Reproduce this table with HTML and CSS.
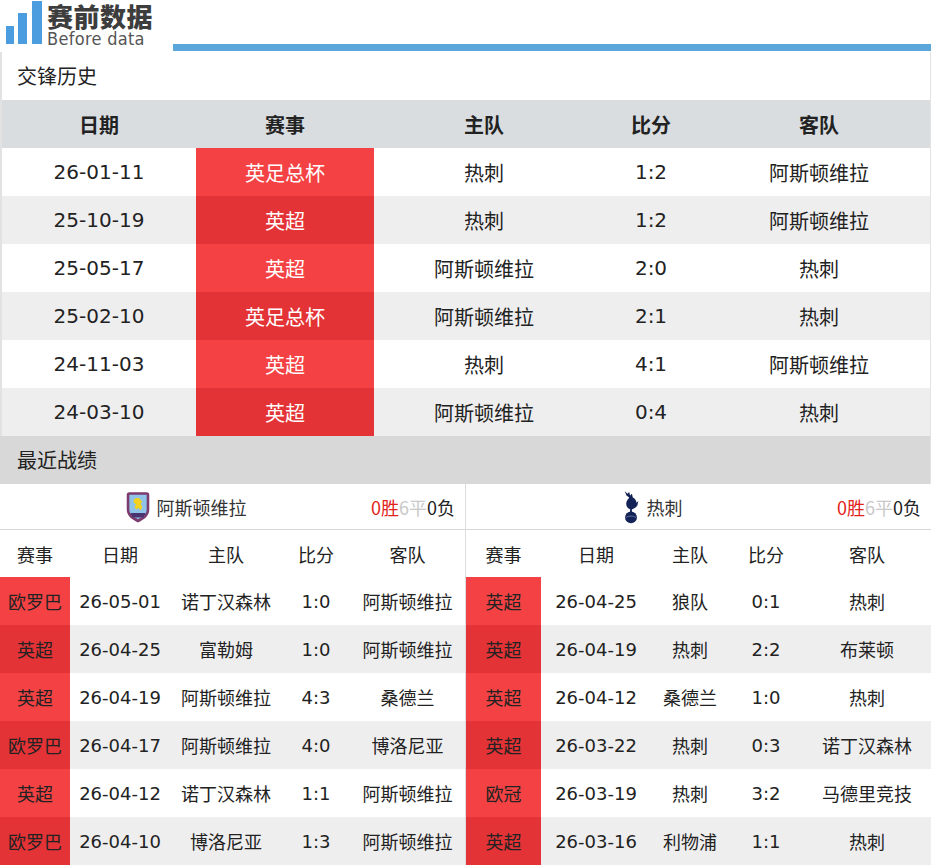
FILE: index.html
```html
<!DOCTYPE html>
<html lang="zh-CN">
<head>
<meta charset="utf-8">
<title>赛前数据</title>
<link rel="stylesheet" href="styles.css">
</head>
<body>
<div class="page">
  <header class="top">
    <div class="logo">
      <svg class="bars" width="44" height="46" viewBox="0 0 44 46">
        <rect x="6" y="26" width="8" height="18" fill="#4b9de0"/>
        <rect x="18" y="13" width="9" height="31" fill="#4b9de0"/>
        <rect x="32" y="1" width="10" height="43" fill="#4b9de0"/>
      </svg>
      <div class="logo-text">
        <div class="logo-cn">赛前数据</div>
        <div class="logo-en">Before data</div>
      </div>
    </div>
    <div class="topline"></div>
  </header>

  <div class="section-title white">交锋历史</div>
  <table class="h2h">
    <colgroup><col style="width:195px"><col style="width:178px"><col style="width:220px"><col style="width:114px"><col></colgroup>
    <thead><tr><th>日期</th><th>赛事</th><th>主队</th><th>比分</th><th>客队</th></tr></thead>
    <tbody>
      <tr><td class="num">26-01-11</td><td class="comp">英足总杯</td><td>热刺</td><td class="num">1:2</td><td>阿斯顿维拉</td></tr>
      <tr><td class="num">25-10-19</td><td class="comp">英超</td><td>热刺</td><td class="num">1:2</td><td>阿斯顿维拉</td></tr>
      <tr><td class="num">25-05-17</td><td class="comp">英超</td><td>阿斯顿维拉</td><td class="num">2:0</td><td>热刺</td></tr>
      <tr><td class="num">25-02-10</td><td class="comp">英足总杯</td><td>阿斯顿维拉</td><td class="num">2:1</td><td>热刺</td></tr>
      <tr><td class="num">24-11-03</td><td class="comp">英超</td><td>热刺</td><td class="num">4:1</td><td>阿斯顿维拉</td></tr>
      <tr><td class="num">24-03-10</td><td class="comp">英超</td><td>阿斯顿维拉</td><td class="num">0:4</td><td>热刺</td></tr>
    </tbody>
  </table>

  <div class="section-title grey">最近战绩</div>
  <div class="recent">
    <div class="half left">
      <div class="team-row">
        <div class="team">
          <svg class="crest" width="26" height="34" viewBox="0 0 30 38">
            <path d="M2 5 Q2 2 5 2 L25 2 Q28 2 28 5 L28 22 C28 30 21 34 15 37 C9 34 2 30 2 22 Z" fill="#7b3b6e"/>
            <path d="M5 5 L25 5 L25 22 C25 28 20 31 15 33 C10 31 5 28 5 22 Z" fill="#8fc4e8"/>
            <path d="M10 11 C12 8 17 8 18 11 L20 13 L18 15 L20 19 L18 23 L16 20 L13 22 L11 19 L13 16 L10 14 Z" fill="#f3d220"/>
            <path d="M6 26 L24 26 L21 31 L9 31 Z" fill="#4a3470"/>
          </svg>
          <span class="team-name">阿斯顿维拉</span>
        </div>
        <div class="record"><span class="w">0胜</span><span class="d">6平</span><span class="l">0负</span></div>
      </div>
      <table class="recent-table">
        <colgroup><col style="width:70px"><col style="width:100px"><col style="width:112px"><col style="width:68px"><col></colgroup>
        <thead><tr><th>赛事</th><th>日期</th><th>主队</th><th>比分</th><th>客队</th></tr></thead>
        <tbody>
          <tr><td class="comp">欧罗巴</td><td class="num">26-05-01</td><td>诺丁汉森林</td><td class="num">1:0</td><td>阿斯顿维拉</td></tr>
          <tr><td class="comp">英超</td><td class="num">26-04-25</td><td>富勒姆</td><td class="num">1:0</td><td>阿斯顿维拉</td></tr>
          <tr><td class="comp">英超</td><td class="num">26-04-19</td><td>阿斯顿维拉</td><td class="num">4:3</td><td>桑德兰</td></tr>
          <tr><td class="comp">欧罗巴</td><td class="num">26-04-17</td><td>阿斯顿维拉</td><td class="num">4:0</td><td>博洛尼亚</td></tr>
          <tr><td class="comp">英超</td><td class="num">26-04-12</td><td>诺丁汉森林</td><td class="num">1:1</td><td>阿斯顿维拉</td></tr>
          <tr><td class="comp">欧罗巴</td><td class="num">26-04-10</td><td>博洛尼亚</td><td class="num">1:3</td><td>阿斯顿维拉</td></tr>
        </tbody>
      </table>
    </div>
    <div class="half right">
      <div class="team-row">
        <div class="team">
          <svg class="crest" width="20" height="35" viewBox="0 0 22 38">
            <path d="M4 2 L7 5 L9 3 L10 7 L12 5 L13 9 C15 10 17 12 17 15 L19 13 L18 18 C16 21 13 22 12 22 L12 26 L10 26 L10 22 C7 21 5 18 6 14 C7 11 9 10 9 9 L6 7 Z" fill="#132257"/>
            <circle cx="11" cy="31" r="6.5" fill="#132257"/>
            <path d="M5.5 31 C9 29 13 29 16.5 31" stroke="#7f8bb0" stroke-width="0.8" fill="none"/>
          </svg>
          <span class="team-name">热刺</span>
        </div>
        <div class="record"><span class="w">0胜</span><span class="d">6平</span><span class="l">0负</span></div>
      </div>
      <table class="recent-table">
        <colgroup><col style="width:75px"><col style="width:110px"><col style="width:78px"><col style="width:74px"><col></colgroup>
        <thead><tr><th>赛事</th><th>日期</th><th>主队</th><th>比分</th><th>客队</th></tr></thead>
        <tbody>
          <tr><td class="comp">英超</td><td class="num">26-04-25</td><td>狼队</td><td class="num">0:1</td><td>热刺</td></tr>
          <tr><td class="comp">英超</td><td class="num">26-04-19</td><td>热刺</td><td class="num">2:2</td><td>布莱顿</td></tr>
          <tr><td class="comp">英超</td><td class="num">26-04-12</td><td>桑德兰</td><td class="num">1:0</td><td>热刺</td></tr>
          <tr><td class="comp">英超</td><td class="num">26-03-22</td><td>热刺</td><td class="num">0:3</td><td>诺丁汉森林</td></tr>
          <tr><td class="comp">欧冠</td><td class="num">26-03-19</td><td>热刺</td><td class="num">3:2</td><td>马德里竞技</td></tr>
          <tr><td class="comp">英超</td><td class="num">26-03-16</td><td>利物浦</td><td class="num">1:1</td><td>热刺</td></tr>
        </tbody>
      </table>
    </div>
  </div>
</div>
</body>
</html>
```

FILE: styles.css
```css
* { box-sizing: border-box; }
html, body { margin: 0; padding: 0; background: #fff; }
body {
  font-family: "Noto Sans CJK SC", "Noto Sans", sans-serif;
  color: #222;
  width: 931px;
  overflow: hidden;
}
.page { width: 931px; }

.top {
  height: 52px;
  display: flex;
  align-items: flex-end;
}
.logo {
  width: 173px;
  height: 52px;
  display: flex;
  align-items: flex-start;
}
.bars { display: block; }
.logo-text {
  margin-left: 3px;
  display: flex;
  flex-direction: column;
  padding-top: 1px;
}
.logo-cn {
  font-size: 26px;
  line-height: 29px;
  font-weight: 900;
  color: #3d3d3d;
  letter-spacing: 0.5px;
}
.logo-en {
  font-family: "DejaVu Sans Condensed", "DejaVu Sans", sans-serif;
  font-size: 18px;
  line-height: 18px;
  color: #555;
  letter-spacing: 0.3px;
}
.topline {
  flex: 1;
  height: 7px;
  background: #5ba7dc;
  margin-bottom: 1px;
}

.section-title {
  height: 48px;
  line-height: 48px;
  padding-left: 15px;
  font-size: 20px;
  color: #222;
  border-left: 2px solid #e2e2e2;
  border-right: 1px solid #e2e2e2;
}
.section-title.white { background: #fff; }
.section-title.grey { background: #d8d8d8; border-left-color: #d8d8d8; }

table {
  border-collapse: collapse;
  table-layout: fixed;
  width: 100%;
}
th, td {
  text-align: center;
  padding: 0;
  white-space: nowrap;
  overflow: hidden;
}
td.num { font-family: "DejaVu Sans", "Noto Sans CJK SC", sans-serif; }

.h2h {
  width: 931px;
  border-left: 2px solid #e2e2e2;
  border-right: 1px solid #e2e2e2;
}
.h2h th {
  height: 48px;
  background: #d9dde0;
  font-size: 20px;
  font-weight: 700;
  color: #222;
}
.h2h td {
  height: 48px;
  font-size: 20px;
  color: #222;
}
.h2h tbody tr:nth-child(even) td { background: #efeeef; }
td.comp { color: #fff; background: #f44244; }
tbody tr:nth-child(even) td.comp { background: #e33336 !important; }

.recent { display: flex; width: 931px; }
.half { width: 465px; }
.half.left { border-right: 1px solid #dcdcdc; width: 466px; }

.team-row {
  height: 46px;
  display: flex;
  align-items: center;
  border-bottom: 1px solid #d6d6d6;
  padding-right: 10px;
}
.team {
  flex: 1;
  display: flex;
  align-items: center;
  justify-content: center;
}
.crest { display: block; margin-right: 6px; }
.team-name { font-size: 18px; color: #333; }
.record { font-size: 18px; }
.record .w { color: #e2231a; }
.record .d { color: #c8c8c8; }
.record .l { color: #222; }

.recent-table th {
  height: 47px;
  font-size: 18px;
  font-weight: 400;
  color: #222;
  background: #fff;
}
.recent-table td {
  height: 48px;
  font-size: 18px;
  color: #222;
}
.recent-table tbody tr:nth-child(even) td { background: #efeeef; }
```
